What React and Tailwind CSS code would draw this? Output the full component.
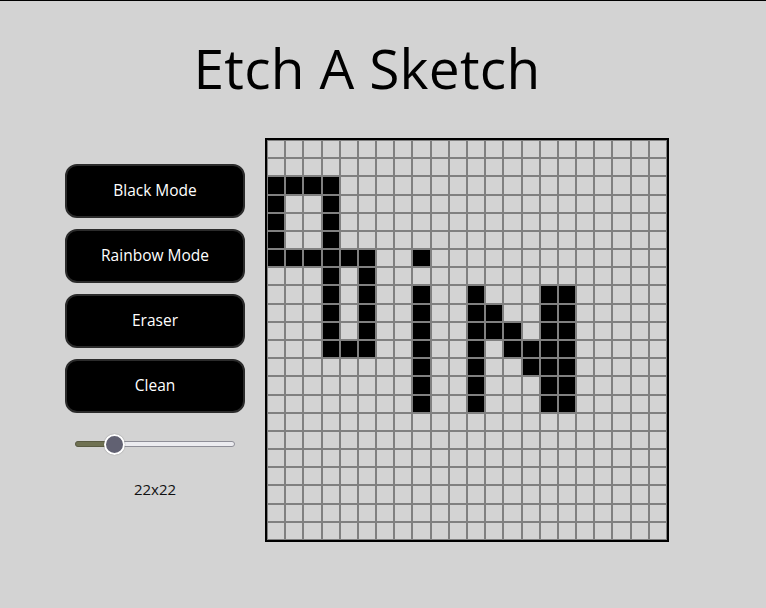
import React from 'react';

const SIZE = 22;

// painted cells, "row:col"
const PAINTED = new Set([
  '2:0', '2:1', '2:2', '2:3',
  '3:0', '3:3', '4:0', '4:3', '5:0', '5:3',
  '6:0', '6:1', '6:2', '6:3', '6:4', '6:5', '6:8',
  '7:3', '7:5', '8:3', '8:5', '9:3', '9:5', '10:3', '10:5',
  '11:3', '11:4', '11:5',
  '8:8', '9:8', '10:8', '11:8', '12:8', '13:8', '14:8',
  '8:11', '8:15', '8:16',
  '9:11', '9:12', '9:15', '9:16',
  '10:11', '10:12', '10:13', '10:15', '10:16',
  '11:11', '11:13', '11:14', '11:15', '11:16',
  '12:11', '12:14', '12:15', '12:16',
  '13:11', '13:15', '13:16',
  '14:11', '14:15', '14:16',
]);

const ModeButton = ({ children }) => (
  <button className="w-[180px] h-[54px] rounded-[12px] bg-black border-2 border-[#2b2b2b] text-white text-[15.5px]">
    {children}
  </button>
);

const Slider = ({ value, min = 1, max = 100 }) => {
  const p = (value - min) / (max - min);
  // thumb centre runs from 10px to width-10px
  const center = 10 + 140 * p;
  return (
    <div className="relative w-[160px] h-[20px] flex items-center">
      <div className="w-full h-[6px] rounded-full bg-[#ececf0] border border-[#8f8f98]" />
      <div
        className="absolute left-0 h-[6px] rounded-l-full bg-[#6f7152] border border-[#5a5b42]"
        style={{ width: `${center}px` }}
      />
      <div
        className="absolute w-[21px] h-[21px] -ml-[10.5px] rounded-full bg-[#616172] border-2 border-white shadow-[0_0_1px_rgba(0,0,0,0.5)]"
        style={{ left: `${center}px` }}
      />
    </div>
  );
};

export default function App() {
  const cells = [];
  for (let r = 0; r < SIZE; r++) {
    for (let c = 0; c < SIZE; c++) {
      const on = PAINTED.has(`${r}:${c}`);
      cells.push(
        <div
          key={`${r}-${c}`}
          className={`border border-[#808080] ${on ? 'bg-black' : 'bg-[#d3d3d3]'}`}
        />
      );
    }
  }

  return (
    <div className="min-h-screen bg-[#d3d3d3] border-t border-black font-['Open_Sans',sans-serif]">
      <div className="w-fit ml-[65px] flex flex-col items-center">
        <h1 className="mt-[27px] text-[55px] leading-[80px] font-normal text-black tracking-[0.3px]">
          Etch A Sketch
        </h1>

        <div className="mt-[30px] flex gap-[20px]">
          <div className="flex flex-col items-center pt-[26px]">
            <div className="flex flex-col gap-[11px]">
              <ModeButton>Black Mode</ModeButton>
              <ModeButton>Rainbow Mode</ModeButton>
              <ModeButton>Eraser</ModeButton>
              <ModeButton>Clean</ModeButton>
            </div>
            <div className="mt-[21px]">
              <Slider value={22} />
            </div>
            <div className="mt-[24px] text-[15px] text-[#111]">22x22</div>
          </div>

          <div className="w-[404px] h-[404px] border-2 border-black grid grid-cols-[repeat(22,1fr)] grid-rows-[repeat(22,1fr)]">
            {cells}
          </div>
        </div>
      </div>
    </div>
  );
}
